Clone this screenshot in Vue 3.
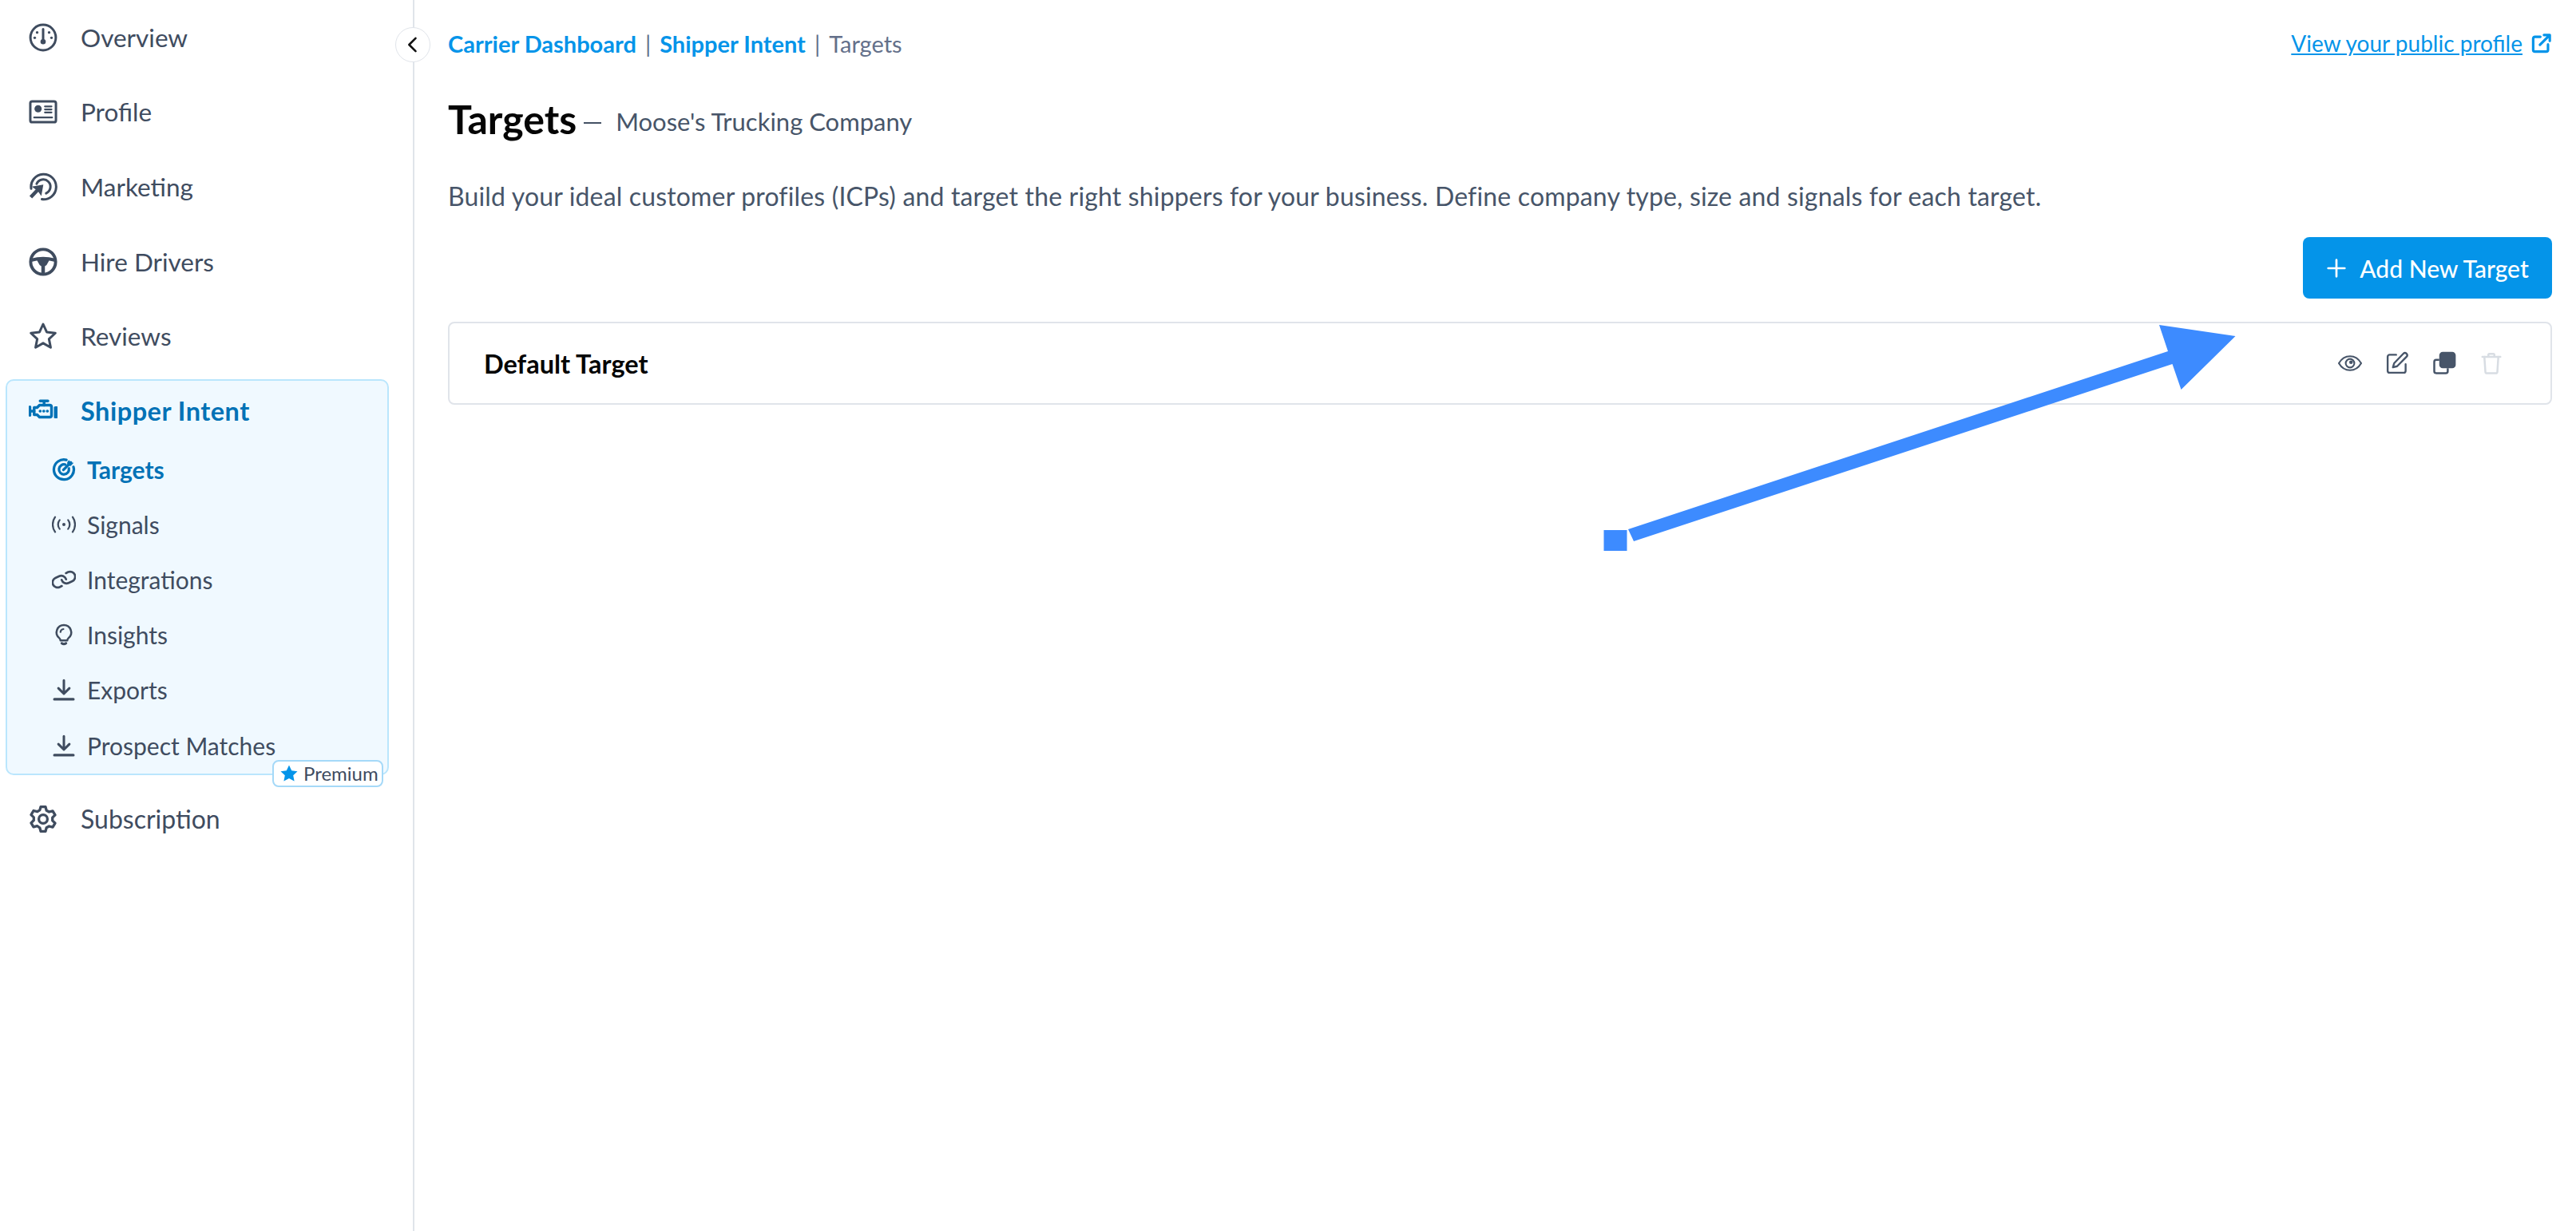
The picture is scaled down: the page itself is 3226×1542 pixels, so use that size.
<template>
  <div class="page">
    <aside class="sidebar">
      <button class="collapse">
        <svg viewBox="0 0 24 24" width="28" height="28" fill="none" stroke="#111" stroke-width="2.2" stroke-linecap="round" stroke-linejoin="round"><path d="M15 5l-7 7 7 7" /></svg>
      </button>

      <nav class="nav">
        <a v-for="item in topItems" :key="item.label" class="nav-item">
          <svg class="nav-icon" viewBox="0 0 24 24" v-html="icons[item.icon]"></svg>
          <span>{{ item.label }}</span>
        </a>

        <div class="group">
          <a class="nav-item group-head">
            <svg class="nav-icon" viewBox="0 0 24 24" v-html="icons.engine"></svg>
            <span>Shipper Intent</span>
          </a>
          <a v-for="sub in subItems" :key="sub.label" class="sub-item" :class="{ active: sub.active }">
            <svg class="sub-icon" viewBox="0 0 24 24" v-html="icons[sub.icon]"></svg>
            <span>{{ sub.label }}</span>
          </a>
          <span class="premium">
            <svg viewBox="0 0 24 24" width="24" height="24"><path fill="#0494e9" d="M12 1.5l3.2 6.7 7.3 1-5.3 5 1.4 7.3-6.6-3.6-6.6 3.6 1.4-7.3-5.3-5 7.3-1z" /></svg>
            Premium
          </span>
        </div>

        <a class="nav-item subscription">
          <svg class="nav-icon" viewBox="0 0 24 24" v-html="icons.gear"></svg>
          <span>Subscription</span>
        </a>
      </nav>
    </aside>

    <main class="main">
      <div class="topbar">
        <div class="crumbs">
          <a>Carrier Dashboard</a><i>|</i><a>Shipper Intent</a><i>|</i><span>Targets</span>
        </div>
        <a class="public-link">
          <span>View your public profile</span>
          <svg viewBox="0 0 24 24" width="27" height="27" fill="none" stroke="#0494e9" stroke-width="2.8" stroke-linecap="round" stroke-linejoin="round">
            <path d="M11 4.5H5a2 2 0 0 0-2 2V19a2 2 0 0 0 2 2h12.5a2 2 0 0 0 2-2v-6" />
            <path d="M10.5 13.5L21 3M15 2.5h6.5V9" />
          </svg>
        </a>
      </div>

      <div class="title-row">
        <h1>Targets</h1>
        <span class="dash"></span>
        <span class="company">Moose's Trucking Company</span>
      </div>

      <p class="intro">Build your ideal customer profiles (ICPs) and target the right shippers for your business. Define company type, size and signals for each target.</p>

      <div class="actions">
        <button class="add-btn">
          <svg viewBox="0 0 24 24" width="26" height="26" fill="none" stroke="#fff" stroke-width="2.5" stroke-linecap="round"><path d="M12 2.5v19M2.5 12h19" /></svg>
          Add New Target
        </button>
      </div>

      <div class="card">
        <strong>Default Target</strong>
        <div class="card-tools">
          <svg viewBox="0 0 24 24" width="30" height="30" fill="none" stroke="#475569" stroke-width="1.7" stroke-linecap="round" stroke-linejoin="round">
            <path d="M.8 12C3.5 7.4 7.3 5 12 5s8.5 2.4 11.2 7C20.5 16.6 16.7 19 12 19S3.5 16.600.8 12z" />
            <circle cx="12" cy="12" r="4.3" />
            <circle cx="13" cy="11" r="1" fill="#475569" />
          </svg>
          <svg viewBox="0 0 24 24" width="30" height="30" fill="none" stroke="#475569" stroke-width="1.9" stroke-linecap="round" stroke-linejoin="round">
            <path d="M11 3.5H4.5a2 2 0 0 0-2 2v14a2 2 0 0 0 2 2h14a2 2 0 0 0 2-2V13" />
            <path d="M18.2 2.4a2.2 2.2 0 0 1 3.2 3.1L12 15l-4.200 1.100L9 12z" />
          </svg>
          <svg viewBox="0 0 24 24" width="30" height="30" fill="none" stroke="#475569" stroke-width="2" stroke-linejoin="round">
            <path d="M7 8.5H4a2 2 0 0 0-2 2V20a2 2 0 0 0 2 2h9.5a2 2 0 0 0 2-2v-3" />
            <rect x="8" y="1.5" width="14.5" height="14.5" rx="2.5" fill="#475569" />
          </svg>
          <svg viewBox="0 0 24 24" width="30" height="30" fill="none" stroke="#d8dde3" stroke-width="2" stroke-linecap="round" stroke-linejoin="round">
            <path d="M3 5.5h18M9 5.5V3.500a1 1 0 0 1 1-1h4a1 1 0 0 1 1 1v2M5 5.500l1 15a1.500 1.500 0 0 0 1.500 1.500h9a1.500 1.500 0 0 0 1.500-1.500l1-15" />
          </svg>
        </div>
      </div>
    </main>

    <!-- flecha de anotacion encima de la pagina -->
    <svg class="annotation" viewBox="0 0 3226 1542" width="3226" height="1542">
      <rect x="2008.5" y="664" width="29" height="26" fill="#3d8bff" />
      <path fill="#3d8bff" d="M2039 663L2715 440L2704 407L2799.5 421L2731.5 488L2720.5 456L2046 678z" />
    </svg>
  </div>
</template>

<script setup>
const topItems = [
  { label: 'Overview', icon: 'gauge' },
  { label: 'Profile', icon: 'card' },
  { label: 'Marketing', icon: 'cursor' },
  { label: 'Hire Drivers', icon: 'wheel' },
  { label: 'Reviews', icon: 'star' }
]

const subItems = [
  { label: 'Targets', icon: 'target', active: true },
  { label: 'Signals', icon: 'signal' },
  { label: 'Integrations', icon: 'link' },
  { label: 'Insights', icon: 'bulb' },
  { label: 'Exports', icon: 'download' },
  { label: 'Prospect Matches', icon: 'download' }
]

const s = 'fill="none" stroke="currentColor" stroke-linecap="round" stroke-linejoin="round"'

const icons = {
  gauge: `<circle cx="12" cy="12" r="10.6" ${s} stroke-width="2" />
    <path ${s} stroke-width="2" d="M12 5v9" />
    <circle cx="12" cy="15.5" r="2.2" fill="currentColor" />
    <circle cx="7" cy="7.8" r="1.1" fill="currentColor" /><circle cx="17" cy="7.8" r="1.1" fill="currentColor" />
    <circle cx="5" cy="12.2" r="1.1" fill="currentColor" /><circle cx="19" cy="12.2" r="1.1" fill="currentColor" />`,
  card: `<rect x="1.3" y="3.3" width="21.4" height="17.4" rx="1.6" ${s} stroke-width="2" />
    <circle cx="7.8" cy="9.5" r="3" fill="currentColor" />
    <path ${s} stroke-width="1.5" d="M13.5 7.5h5.5M13.5 10h5.5M13.5 12.5h5.5M4.5 16.8h15" />`,
  cursor: `<path ${s} stroke-width="2" d="M2 13.5A10.5 10.5 0 1 1 11 22.4" />
    <path ${s} stroke-width="2" d="M6.6 9.5A6 6 0 1 1 14.5 17.4" />
    <path fill="currentColor" d="M12.2 10.2l-1.7 9.4-2.5-3.5-5.2 5.6-2.2-2 5.2-5.5-3.3-2.4z" />`,
  wheel: `<circle cx="12" cy="12" r="10.4" ${s} stroke-width="2.6" />
    <path ${s} stroke-width="2.6" d="M2.5 10.5C9 8.7 15 8.7 21.5 10.5" />
    <path fill="currentColor" d="M6.5 10h11l-2.6 4.6-1.4 1V22h-3v-6.4l-1.4-1z" />`,
  star: `<path ${s} stroke-width="2" d="M12 2l3 6.6 7.2.9-5.3 4.9 1.400 7.100-6.300-3.600-6.300 3.600 1.400-7.100L1.800 9.500 9 8.600z" />`,
  engine: `<path ${s} stroke-width="2.3" d="M4.5 9h2.5L9 7h8.5a1.5 1.5 0 0 1 1.5 1.500v7a1.500 1.500 0 0 1-1.500 1.500H9l-2-2H4.500z" />
    <path ${s} stroke-width="2.3" d="M9.500 3.500h6.500M12.800 3.500V7M1 8.500v7M1 12h3.500" />
    <path ${s} stroke-width="2.4" d="M9.500 12h.1M12.500 12h.1M15.500 12h.1" />
    <rect x="21" y="8" width="3.5" height="10" rx="1" fill="currentColor" />`,
  target: `<path ${s} stroke-width="2.6" d="M14.500 2.500A10 10 0 1 0 21.600 9.500" />
    <path ${s} stroke-width="2.6" d="M13.500 7.200A5 5 0 1 0 17 11" />
    <path ${s} stroke-width="2.6" d="M11.500 12.500L19 5" />
    <path fill="currentColor" d="M17 2.500l2 2.500 2.800.3-3 3.200-3.300-.5-.2-3z" />`,
  signal: `<circle cx="12" cy="12" r="1.6" fill="currentColor" />
    <path ${s} stroke-width="1.8" d="M7.800 7.500a7 7 0 0 0 0 9M16.200 7.500a7 7 0 0 1 0 9" />
    <path ${s} stroke-width="1.8" d="M3.200 4.500a13 13 0 0 0 0 15M20.800 4.500a13 13 0 0 1 0 15" />`,
  link: `<g transform="rotate(20 12 12)">
    <path ${s} stroke-width="2.2" d="M10 13a5 5 0 0 0 7.540.54l3-3a5 5 0 0 0-7.070-7.070l-1.720 1.710" />
    <path ${s} stroke-width="2.2" d="M14 11a5 5 0 0 0-7.540-.54l-3 3a5 5 0 0 0 7.070 7.070l1.710-1.710" /></g>`,
  bulb: `<g transform="translate(12 12) scale(.86) translate(-12 -12)">
    <path ${s} stroke-width="2.3" d="M12 .8a8.500 8.500 0 0 0-5.500 15c1 .9 1.500 1.900 1.500 3h8c0-1.100.5-2.100 1.500-3A8.500 8.500 0 0 0 12 .8z" />
    <path ${s} stroke-width="2.8" d="M9.500 22c1.600 1.200 3.400 1.200 5 0" />
    <path ${s} stroke-width="2" d="M8 9a4 4 0 0 1 3.500-3.500" /></g>`,
  download: `<path ${s} stroke-width="2.4" d="M12 2.500v13M6.500 10.500L12 16l5.500-5.500" />
    <path ${s} stroke-width="2.6" d="M2.500 21.500h19" />`,
  gear: `<path ${s} stroke-width="2.2" d="M10 1.800h4l.8 3 2.200 1.200 3-.8 2 3.400-2.200 2.200v2.400l2.200 2.200-2 3.400-3-.8-2.200 1.200-.8 3h-4l-.8-3L7 17.800l-3 .8-2-3.400 2.200-2.200v-2.400L2 8.400l2-3.400 3 .8 2.200-1.200z" />
    <circle cx="12" cy="12" r="3.6" ${s} stroke-width="2.2" />`
}
</script>

<style>
html, body {
  margin: 0;
  background: #fff;
}
</style>

<style scoped>
.page {
  position: relative;
  display: flex;
  width: 3226px;
  height: 1542px;
  overflow: hidden;
  font-family: Lato, "Open Sans", sans-serif;
  background: #fff;
}

.sidebar {
  position: relative;
  flex: 0 0 519px;
  border-right: 2px solid #e0e4ea;
  box-sizing: border-box;
}

.collapse {
  position: absolute;
  top: 34px;
  right: -22px;
  width: 44px;
  height: 44px;
  padding: 0;
  display: flex;
  align-items: center;
  justify-content: center;
  background: #fff;
  border: 1.5px solid #e0e4ea;
  border-radius: 50%;
}

.nav {
  padding: 0 30px 0 7px;
  display: flex;
  flex-direction: column;
}

.nav-item {
  height: 93.6px;
  display: flex;
  align-items: center;
  gap: 29px;
  padding-left: 29px;
  font-size: 31.5px;
  color: #3f4c5f;
}

.nav-icon {
  width: 36px;
  height: 36px;
  flex: none;
}

.group {
  position: relative;
  margin-top: 7px;
  height: 496px;
  box-sizing: border-box;
  background: #f0f9ff;
  border: 2px solid #bae6fd;
  border-radius: 10px;
}

.group-head {
  height: 76px;
  padding-left: 27px;
  color: #0272b6;
  font-size: 32.5px;
  font-weight: 700;
  letter-spacing: .5px;
}

.sub-item {
  height: 69.2px;
  display: flex;
  align-items: center;
  gap: 14px;
  padding-left: 56px;
  font-size: 30px;
  color: #3f4c5f;
}

.sub-item.active {
  color: #0272b6;
  font-weight: 700;
}

.sub-icon {
  width: 30px;
  height: 30px;
  flex: none;
}

.premium {
  position: absolute;
  left: 332px;
  bottom: -17px;
  width: 139px;
  height: 34px;
  box-sizing: border-box;
  display: flex;
  align-items: center;
  gap: 6px;
  padding-left: 7px;
  background: #fff;
  border: 2px solid #a5d9f8;
  border-radius: 8px;
  font-size: 24px;
  color: #3f4c5f;
}

.subscription {
  margin-top: 8px;
  font-size: 32px;
}

.main {
  flex: 1;
  min-width: 0;
  padding: 0 30px 0 42px;
}

.topbar {
  display: flex;
  justify-content: space-between;
  align-items: center;
  padding-top: 34px;
  height: 40px;
  font-size: 29px;
}

.crumbs {
  display: flex;
  align-items: center;
  color: #64708a;
}

.crumbs a {
  color: #0494e9;
  font-weight: 700;
}

.crumbs i {
  font-style: normal;
  margin: 0 11px;
}

.public-link {
  display: flex;
  align-items: center;
  gap: 10px;
  color: #0494e9;
}

.public-link span {
  font-size: 28px;
  text-decoration: underline;
}

.title-row {
  margin-top: 45px;
  display: flex;
  align-items: center;
  height: 60px;
}

.title-row h1 {
  margin: 0;
  font-size: 50px;
  font-weight: 700;
  color: #050505;
}

.dash {
  width: 22px;
  height: 2px;
  margin: 10px 18px 0 9px;
  background: #445164;
}

.company {
  font-size: 31px;
  color: #475569;
  padding-top: 6px;
}

.intro {
  margin: 47px 0 0;
  font-size: 32px;
  letter-spacing: .16px;
  line-height: 40px;
  color: #475569;
}

.actions {
  display: flex;
  justify-content: flex-end;
  margin-top: 31px;
}

.add-btn {
  height: 77px;
  width: 312px;
  display: flex;
  align-items: center;
  justify-content: center;
  gap: 16px;
  background: #0494e9;
  border: 0;
  border-radius: 8px;
  color: #fff;
  font-family: inherit;
  font-size: 30px;
  font-weight: 500;
}

.card {
  margin-top: 29px;
  height: 104px;
  box-sizing: border-box;
  display: flex;
  align-items: center;
  justify-content: space-between;
  padding: 0 59px 0 43px;
  border: 2px solid #e0e4ea;
  border-radius: 8px;
  font-size: 32.5px;
  color: #050505;
}

.card-tools {
  display: flex;
  align-items: center;
  gap: 29px;
}

.annotation {
  position: absolute;
  left: 0;
  top: 0;
  pointer-events: none;
}
</style>
